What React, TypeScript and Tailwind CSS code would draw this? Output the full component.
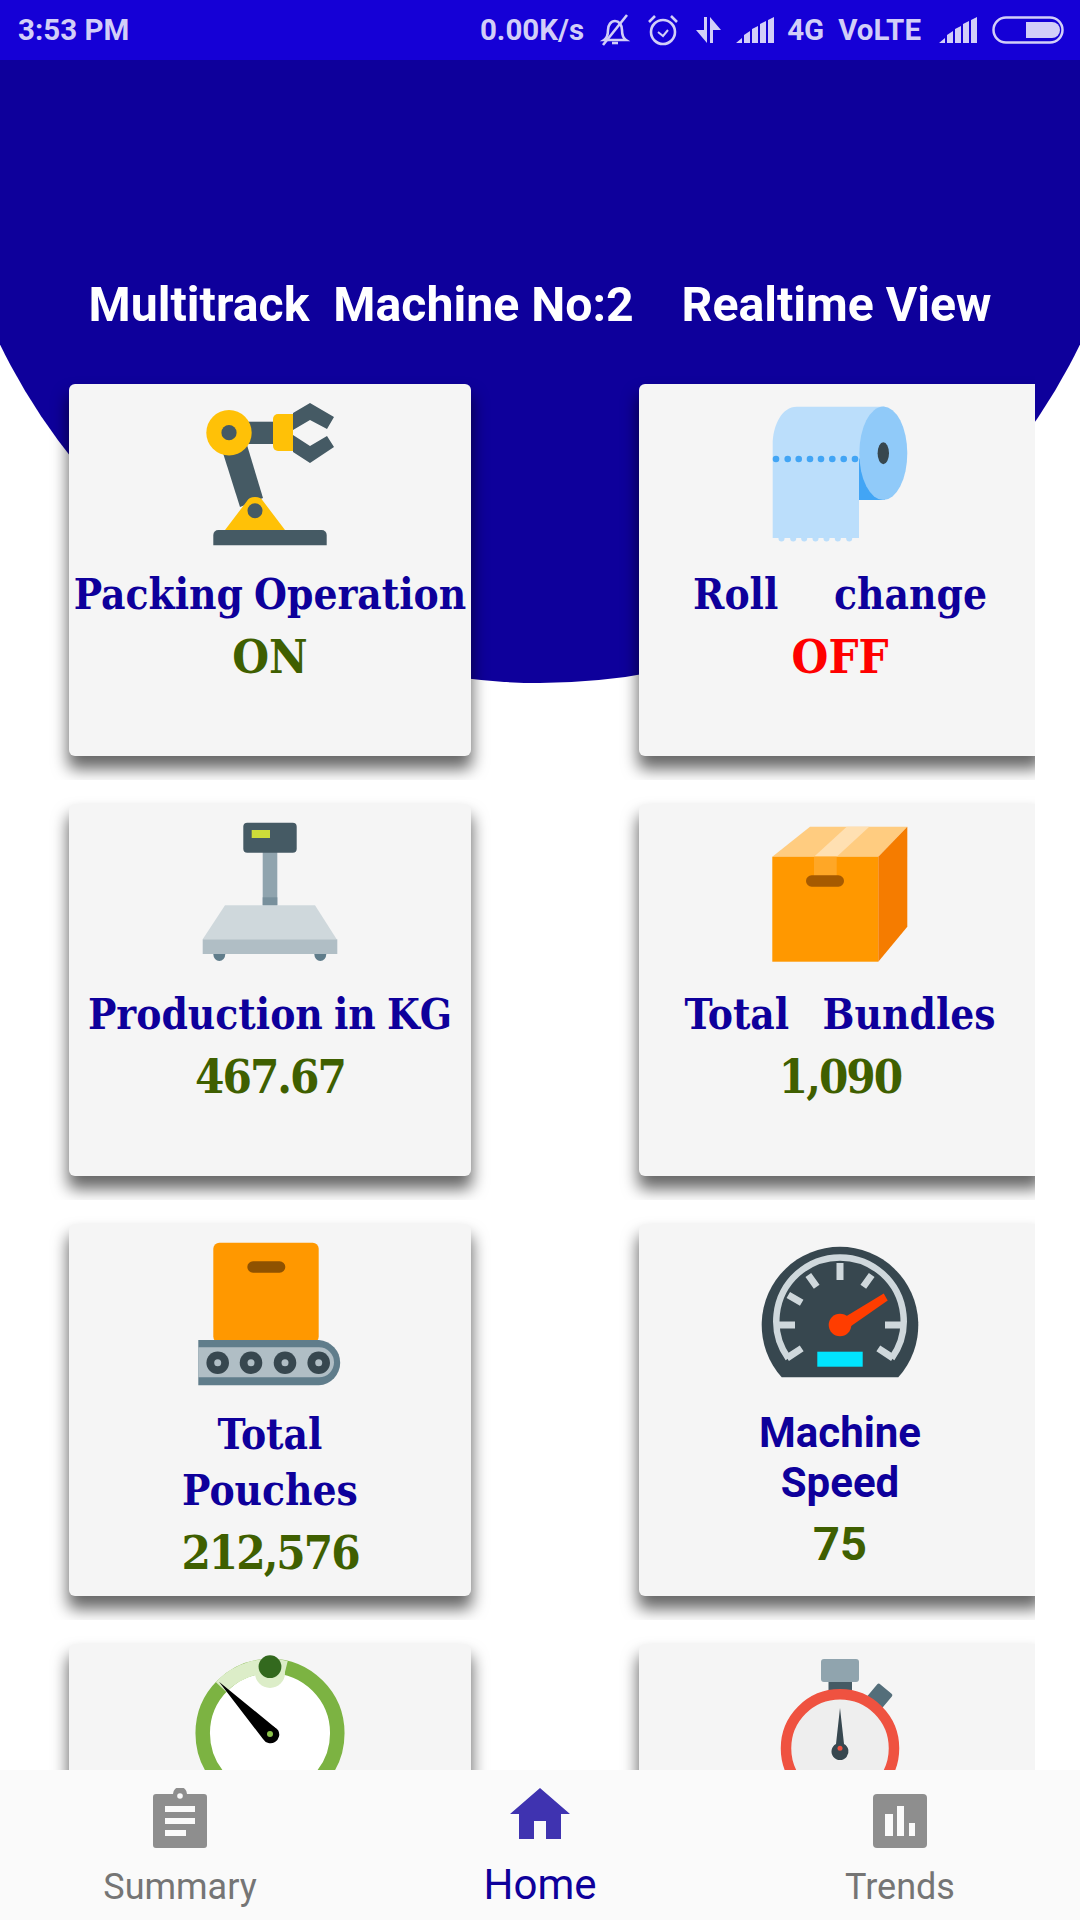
import React from "react";

const serif = "font-['DejaVu_Serif_Condensed','DejaVu_Serif',serif]";

const Robot = () => (
  <svg width="160" height="160" viewBox="0 0 160 160">
    <path d="M23.3 145.3V135a5 5 0 0 1 5-5h103.4a5 5 0 0 1 5 5v10.3z" fill="#455A64" />
    <path d="M33 53L57 45L73 98L50 107z" fill="#455A64" />
    <path d="M35 130L57 101Q59 97 65 97Q71 97 73 101L95 130z" fill="#FFC107" />
    <circle cx="65" cy="110.7" r="7.5" fill="#455A64" />
    <rect x="57" y="21.7" width="32" height="22.3" fill="#455A64" />
    <circle cx="39" cy="32.7" r="22.7" fill="#FFC107" />
    <circle cx="39" cy="32.7" r="7.6" fill="#455A64" />
    <path d="M88 14H103V51H88a5 5 0 0 1-5-5V19a5 5 0 0 1 5-5z" fill="#FFC107" />
    <path d="M103 13L120 3L144 17L137 29L120 20L103 30z" fill="#455A64" />
    <path d="M103 35L120 46L137 36L144 47L120 63L103 52z" fill="#455A64" />
  </svg>
);

const Roll = () => (
  <svg width="160" height="160" viewBox="0 0 160 160">
    <path d="M12.7 138V45C12.7 25 22 6.7 36.7 6.7H125V60L99 100V138z" fill="#BBDEFB" />
    {[16, 27.7, 38.7, 50, 61, 72.3, 83.7, 95].map((x) => (
      <circle key={x} cx={x} cy="59" r="3.3" fill="#42A5F5" />
    ))}
    {[16, 27.7, 38.7, 50, 61, 72.3, 83.7].map((x) => (
      <circle key={x} cx={x + 5.5} cy="138.5" r="3" fill="#BBDEFB" />
    ))}
    <path d="M99 58V100H125z" fill="#42A5F5" />
    <ellipse cx="123.3" cy="53.3" rx="24" ry="46.7" fill="#90CAF9" />
    <ellipse cx="123.3" cy="53.3" rx="5.7" ry="11" fill="#37474F" />
  </svg>
);

const Scale = () => (
  <svg width="160" height="160" viewBox="0 0 160 160">
    <rect x="72.7" y="30" width="14.6" height="56" fill="#90A4AE" />
    <rect x="72.7" y="77.3" width="14.6" height="8" fill="#78909C" />
    <rect x="53.3" y="2.7" width="53.4" height="30" rx="4" fill="#455A64" />
    <rect x="61.7" y="10" width="18.3" height="8" fill="#CDDC39" />
    <path d="M35 85.3H125L146.7 119.3H12.7z" fill="#CFD8DC" />
    <rect x="12.7" y="119.3" width="134.6" height="14.7" fill="#B0BEC5" />
    <path d="M23.3 134H35.3A6 7 0 0 1 23.3 134z" fill="#607D8B" />
    <path d="M124.3 134H136.3A6 7 0 0 1 124.3 134z" fill="#607D8B" />
  </svg>
);

const Box = () => (
  <svg width="160" height="160" viewBox="0 0 160 160">
    <path d="M12.3 36.7L50 6.7H147.3L118.3 36.7z" fill="#FFCC80" />
    <path d="M54 36.7L86.7 6.7H109.3L76.7 36.7z" fill="#FFE0B2" />
    <rect x="12.3" y="36.7" width="106" height="105" fill="#FF9800" />
    <path d="M118.3 36.7L147.3 6.7V106.7L118.3 141.7z" fill="#F57C00" />
    <rect x="54" y="36.7" width="22.7" height="24" fill="#FFA726" />
    <rect x="46" y="55.3" width="38" height="11.4" rx="5.7" fill="#A65A00" />
  </svg>
);

const Conveyor = () => (
  <svg width="160" height="160" viewBox="0 0 160 160">
    <rect x="23.3" y="2.7" width="105.4" height="100" rx="6" fill="#FF9800" />
    <rect x="57.3" y="21.3" width="38" height="11.4" rx="5.7" fill="#8F5200" />
    <path d="M8.3 100H129a22.7 22.7 0 0 1 0 45.3H8.3z" fill="#607D8B" />
    <path d="M8.3 107.3H129a15 15 0 0 1 0 30H8.3z" fill="#B0BEC5" />
    {[27.7, 61, 95, 128.7].map((x) => (
      <g key={x}>
        <circle cx={x} cy="122.7" r="11.3" fill="#37474F" />
        <circle cx={x} cy="122.7" r="3.5" fill="#B0BEC5" />
      </g>
    ))}
  </svg>
);

const Speedo = () => (
  <svg width="160" height="160" viewBox="0 0 160 160">
    <path d="M21.7 137.3A78.3 78.3 0 1 1 138.3 137.3z" fill="#37474F" />
    <path d="M28.3 118.3A63.7 63.7 0 1 1 131.7 118.3" fill="none" stroke="#CFD8DC" strokeWidth="6.5" />
    <g stroke="#CFD8DC" strokeWidth="7" fill="none">
      <path d="M19 85H35M125 85H141M80 23V40M28.3 55L41.7 62.7M48.3 35L56.7 46.7M111.7 35L103.3 46.7M27 118L41.7 108.3M133 118L118.3 108.3" />
    </g>
    <path d="M80 80L123.7 53.5L127.7 60.5L84 91z" fill="#FF3D00" />
    <circle cx="80" cy="85" r="11.3" fill="#FF3D00" />
    <rect x="57.3" y="111.7" width="45.4" height="15" fill="#00E5FF" />
  </svg>
);

const Gauge = () => (
  <svg width="160" height="160" viewBox="0 0 160 160" className="overflow-visible">
    <circle cx="80" cy="73.3" r="62" fill="#FFFFFF" />
    <circle cx="80" cy="73.3" r="67.3" fill="none" stroke="#7CB342" strokeWidth="14.5" />
    <path d="M31 27A67.3 67.3 0 0 1 96 8" fill="none" stroke="#DCEDC8" strokeWidth="14.5" />
    <circle cx="80" cy="13" r="15" fill="#DCEDC8" />
    <circle cx="80" cy="6.7" r="11.4" fill="#33691E" />
    <path d="M29 21.7L88 70A8.5 8.5 0 0 1 73 79z" fill="#000000" />
    <circle cx="80" cy="74" r="8" fill="#000000" />
    <circle cx="80" cy="74" r="3" fill="#8BC34A" />
  </svg>
);

const Stopwatch = () => (
  <svg width="160" height="160" viewBox="0 0 160 160" className="overflow-visible">
    <rect x="68.5" y="20" width="23.5" height="14" fill="#455A64" />
    <rect x="61" y="-1" width="38" height="23" rx="3" fill="#90A4AE" />
    <rect x="110" y="27" width="19" height="19" rx="2" transform="rotate(40 120 36.7)" fill="#546E7A" />
    <circle cx="80" cy="88.3" r="54" fill="#EEEEEE" stroke="#EF5240" strokeWidth="10.5" />
    <path d="M80 48L84 84A8.5 8.5 0 1 1 76 84z" fill="#37474F" />
    <circle cx="80" cy="88.3" r="2.5" fill="#EF5240" />
  </svg>
);

const cards: { icon: React.ReactNode; title: string[]; value?: string; red?: boolean; sans?: boolean; num?: boolean }[][] = [
  [
    { icon: <Robot />, title: ["Packing Operation"], value: "ON" },
    { icon: <Roll />, title: ["Roll     change"], value: "OFF", red: true },
  ],
  [
    { icon: <Scale />, title: ["Production in KG"], value: "467.67", num: true },
    { icon: <Box />, title: ["Total   Bundles"], value: "1,090", num: true },
  ],
  [
    { icon: <Conveyor />, title: ["Total", "Pouches"], value: "212,576", num: true },
    { icon: <Speedo />, title: ["Machine", "Speed"], value: "75", sans: true },
  ],
  [
    { icon: <Gauge />, title: [] },
    { icon: <Stopwatch />, title: [] },
  ],
];

function Card({ c }: { c: (typeof cards)[number][number] }) {
  return (
    <div className="flex h-[372px] w-[402px] shrink-0 flex-col items-center rounded-[6px] bg-[#F5F5F5] pt-4 shadow-[0_12px_16px_1px_rgba(0,0,0,0.6)]">
      {c.icon}
      {c.sans ? (
        <div className="mt-[8px] flex flex-col items-center font-['Roboto',sans-serif] font-bold">
          {c.title.map((t) => (
            <div key={t} className="text-[42px] leading-[50px] text-[#0E009B]">{t}</div>
          ))}
          <div className="mt-[6px] text-[47px] leading-[60px] text-[#3F5F00]">{c.value}</div>
        </div>
      ) : (
        <div className={`mt-[7px] flex flex-col items-center font-bold ${serif}`}>
          {c.title.map((t) => (
            <div key={t} className="whitespace-pre text-[42px] leading-[56px] text-[#0E009B] [word-spacing:-2px]">{t}</div>
          ))}
          {c.value && (
            <div className={`mt-[2px] text-[47px] leading-[64px] ${c.red ? "text-[#FF0000]" : "text-[#3F5F00]"} ${c.num ? "tracking-[-2px]" : ""}`}>{c.value}</div>
          )}
        </div>
      )}
    </div>
  );
}

const ink = "#D2CEF8";
const bars = "M0 26l6-5v5zM8 26v-8l6-4v12zM16 26V12l6-3v17zM24 26V7l6-3v22zM32 26V3l6-3v26z";

function StatusBar() {
  return (
    <div className="relative z-10 flex h-[60px] shrink-0 items-center justify-between bg-[#1500D6] pl-[18px] pr-4 font-['Roboto',sans-serif] text-[29.5px] font-bold text-[#D2CEF8]">
      <span>3:53 PM</span>
      <div className="flex items-center">
        <span className="mr-[15px]">0.00K/s</span>
        <svg width="32" height="32" viewBox="0 0 32 32" fill="none" stroke={ink} strokeWidth="2.6" className="mr-[15px]">
          <path d="M5 26c3-2 4-5 4-10 0-5 3-9 7-9s7 4 7 9c0 5 1 8 4 10z" />
          <path d="M13 29h6" />
          <path d="M4 31L28 1" />
        </svg>
        <svg width="34" height="34" viewBox="0 0 34 34" fill="none" stroke={ink} strokeWidth="2.6" className="mr-[14px]">
          <circle cx="17" cy="19" r="12" />
          <path d="M12 19l5 4 5-6" strokeWidth="2" />
          <path d="M3 9l6-6M31 9l-6-6" />
        </svg>
        <svg width="28" height="30" viewBox="0 0 28 30" fill={ink} className="mr-[14px]">
          <path d="M13 2V28L2 15H10V2z" />
          <path d="M16 28V2L27 15H19V28z" />
        </svg>
        <svg width="38" height="26" viewBox="0 0 38 26" fill={ink} className="mr-[13px]">
          <path d={bars} />
        </svg>
        <span className="mr-[14px]">4G</span>
        <span className="mr-[18px]">VoLTE</span>
        <svg width="38" height="26" viewBox="0 0 38 26" fill={ink} className="mr-[15px]">
          <path d={bars} />
        </svg>
        <svg width="72" height="28" viewBox="0 0 72 28">
          <rect x="1.5" y="1.5" width="69" height="25" rx="12.5" fill="none" stroke={ink} strokeWidth="2.5" />
          <path d="M34 6H60a8 8 0 0 1 0 16H34z" fill={ink} />
        </svg>
      </div>
    </div>
  );
}

function BottomNav() {
  return (
    <div className="relative z-10 flex h-[150px] shrink-0 bg-[#FAFAFA] font-['Roboto',sans-serif]">
      <div className="flex flex-1 flex-col items-center pt-[18px]">
        <svg width="54" height="60" viewBox="0 0 54 60">
          <path d="M3 6H20a7 7 0 0 1 14 0H51a3 3 0 0 1 3 3V57a3 3 0 0 1-3 3H3a3 3 0 0 1-3-3V9a3 3 0 0 1 3-3z" fill="#8E8E8E" />
          <circle cx="27" cy="8" r="2.8" fill="#FAFAFA" />
          <rect x="12" y="18" width="30" height="6" fill="#FAFAFA" />
          <rect x="12" y="30" width="30" height="6" fill="#FAFAFA" />
          <rect x="12" y="42" width="21" height="6" fill="#FAFAFA" />
        </svg>
        <span className="mt-[17px] text-[36px] leading-[44px] text-[#757575]">Summary</span>
      </div>
      <div className="flex flex-1 flex-col items-center pt-[18px]">
        <svg width="60" height="60" viewBox="0 0 60 60">
          <path d="M30 0L60 26H51V51H36V33H24V51H9V26H0z" fill="#3F33B0" />
        </svg>
        <span className="mt-[13px] text-[42px] leading-[48px] text-[#0E009B]">Home</span>
      </div>
      <div className="flex flex-1 flex-col items-center pt-[18px]">
        <svg width="54" height="60" viewBox="0 0 54 60">
          <path d="M4 6H50a4 4 0 0 1 4 4V56a4 4 0 0 1-4 4H4a4 4 0 0 1-4-4V10a4 4 0 0 1 4-4z" fill="#8E8E8E" />
          <rect x="12" y="26" width="8" height="22" fill="#FAFAFA" />
          <rect x="24" y="18" width="7" height="30" fill="#FAFAFA" />
          <rect x="36" y="35" width="6" height="13" fill="#FAFAFA" />
        </svg>
        <span className="mt-[17px] text-[36px] leading-[44px] text-[#757575]">Trends</span>
      </div>
    </div>
  );
}

export default function App() {
  return (
    <div className="relative flex h-[1920px] w-[1080px] flex-col overflow-hidden bg-white">
      <div className="absolute -left-[60px] -top-[517px] h-[1200px] w-[1200px] rounded-full bg-[#0E009B]" />
      <StatusBar />
      <div className="relative min-h-0 flex-1 overflow-hidden">
        <div className="flex h-[300px] items-center justify-center whitespace-pre pt-[190px] font-['Roboto',sans-serif] text-[48.2px] font-bold leading-[60px] text-white">
          Multitrack  Machine No:2    Realtime View
        </div>
        <div className="w-[1035px] overflow-hidden">
          {cards.map((row, i) => (
            <div key={i} className="flex h-[420px] gap-[168px] overflow-hidden pl-[69px] pt-6">
              {row.map((c, j) => (
                <Card key={j} c={c} />
              ))}
            </div>
          ))}
        </div>
      </div>
      <BottomNav />
    </div>
  );
}
